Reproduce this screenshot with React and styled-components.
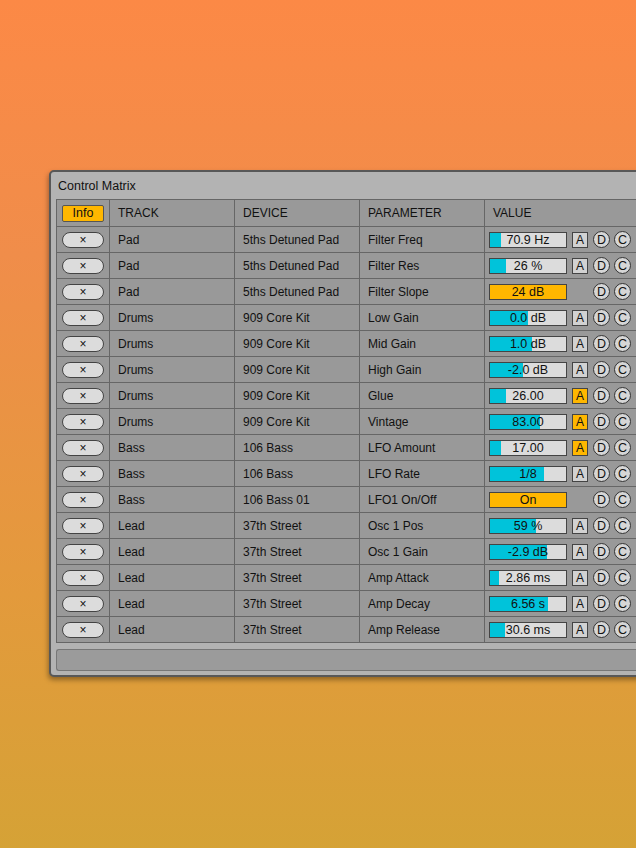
import React from "react";
import styled, { createGlobalStyle } from "styled-components";

//rows cua bang: track, device, param, value text, fill (0-1), enum (full yellow), auto (A vang)
const ROWS = [
  { track: "Pad", device: "5ths Detuned Pad", param: "Filter Freq", value: "70.9 Hz", fill: 0.14 },
  { track: "Pad", device: "5ths Detuned Pad", param: "Filter Res", value: "26 %", fill: 0.21 },
  { track: "Pad", device: "5ths Detuned Pad", param: "Filter Slope", value: "24 dB", isEnum: true },
  { track: "Drums", device: "909 Core Kit", param: "Low Gain", value: "0.0 dB", fill: 0.5 },
  { track: "Drums", device: "909 Core Kit", param: "Mid Gain", value: "1.0 dB", fill: 0.55 },
  { track: "Drums", device: "909 Core Kit", param: "High Gain", value: "-2.0 dB", fill: 0.43 },
  { track: "Drums", device: "909 Core Kit", param: "Glue", value: "26.00", fill: 0.21, auto: true },
  { track: "Drums", device: "909 Core Kit", param: "Vintage", value: "83.00", fill: 0.66, auto: true },
  { track: "Bass", device: "106 Bass", param: "LFO Amount", value: "17.00", fill: 0.14, auto: true },
  { track: "Bass", device: "106 Bass", param: "LFO Rate", value: "1/8", fill: 0.71 },
  { track: "Bass", device: "106 Bass 01", param: "LFO1 On/Off", value: "On", isEnum: true },
  { track: "Lead", device: "37th Street", param: "Osc 1 Pos", value: "59 %", fill: 0.6 },
  { track: "Lead", device: "37th Street", param: "Osc 1 Gain", value: "-2.9 dB", fill: 0.75 },
  { track: "Lead", device: "37th Street", param: "Amp Attack", value: "2.86 ms", fill: 0.12 },
  { track: "Lead", device: "37th Street", param: "Amp Decay", value: "6.56 s", fill: 0.76 },
  { track: "Lead", device: "37th Street", param: "Amp Release", value: "30.6 ms", fill: 0.2 },
];

const YELLOW = "#ffb700";
const CYAN = "#00c3da";

const GlobalStyle = createGlobalStyle`
  html, body {
    margin: 0;
    padding: 0;
  }
  body {
    min-height: 848px;
    overflow: hidden;
    background: linear-gradient(180deg, #fc8946 0%, #f08d4a 30%, #e39a3c 70%, #d5a236 100%);
    font-family: "Liberation Sans", Arial, sans-serif;
    color: #111;
  }
`;

const Page = styled.div`
  height: 848px;
  padding: 170px 0 0 49px;
  box-sizing: border-box;
`;

const Panel = styled.div`
  width: 640px;
  background: #b3b3b3;
  border: 2px solid #585858;
  border-radius: 5px;
  box-shadow: -1px 3px 5px rgba(0, 0, 0, 0.35);
  padding: 0 0 4px 5px;
  box-sizing: border-box;
`;

const Title = styled.div`
  height: 27px;
  display: flex;
  align-items: center;
  padding-left: 2px;
  font-size: 12.5px;
`;

const Table = styled.div`
  border-top: 1px solid #666;
  border-left: 1px solid #666;
  background: #999;
`;

const Row = styled.div`
  display: grid;
  grid-template-columns: 53px 125px 125px 125px 1fr;
  height: ${(p) => (p.$header ? 27 : 26)}px;
  border-bottom: 1px solid #666;
  box-sizing: border-box;
`;

const Cell = styled.div`
  display: flex;
  align-items: center;
  gap: ${(p) => (p.$value ? "5px" : "0")};
  padding-left: ${(p) => (p.$center ? "0" : p.$value ? "4px" : "8px")};
  justify-content: ${(p) => (p.$center ? "center" : "flex-start")};
  border-right: 1px solid #666;
  font-size: 12px;
  white-space: nowrap;
  overflow: hidden;
`;

const InfoButton = styled.div`
  width: 42px;
  height: 17px;
  box-sizing: border-box;
  border: 1px solid #555;
  border-radius: 2px;
  background: ${YELLOW};
  display: flex;
  align-items: center;
  justify-content: center;
  font-size: 12.5px;
`;

const RemoveButton = styled.div`
  width: 42px;
  height: 16px;
  box-sizing: border-box;
  border: 1px solid #444;
  border-radius: 8px;
  background: #dcdcdc;
  display: flex;
  align-items: center;
  justify-content: center;
  font-size: 12px;
  line-height: 1;
`;

const Slider = styled.div`
  position: relative;
  width: 78px;
  height: 16px;
  box-sizing: border-box;
  border: 1px solid #444;
  background: ${(p) => (p.$enum ? YELLOW : "#dcdcdc")};
  overflow: hidden;
  flex: none;
`;

const Fill = styled.div`
  position: absolute;
  left: 0;
  top: 0;
  bottom: 0;
  background: ${CYAN};
`;

const SliderText = styled.span`
  position: absolute;
  inset: 0;
  display: flex;
  align-items: center;
  justify-content: center;
  font-size: 12.5px;
`;

const AButton = styled.div`
  width: 16px;
  height: 16px;
  box-sizing: border-box;
  border: 1px solid #444;
  background: ${(p) => (p.$on ? YELLOW : "#d2d2d2")};
  visibility: ${(p) => (p.$hidden ? "hidden" : "visible")};
  display: flex;
  align-items: center;
  justify-content: center;
  font-size: 12px;
  flex: none;
`;

const Round = styled.div`
  width: 17px;
  height: 17px;
  box-sizing: border-box;
  border: 1px solid #333;
  border-radius: 50%;
  background: #d6d6d6;
  display: flex;
  align-items: center;
  justify-content: center;
  font-size: 12.5px;
  flex: none;
  margin-left: ${(p) => (p.$first ? "0" : "-1px")};
`;

const StatusBar = styled.div`
  margin-top: 6px;
  height: 22px;
  box-sizing: border-box;
  border: 1px solid #777;
  border-right: none;
  border-radius: 3px 0 0 3px;
  background: #9b9b9b;
`;

const ValueCell = ({ row }) => (
  <Cell $value>
    <Slider $enum={row.isEnum}>
      {!row.isEnum && <Fill style={{ width: `${row.fill * 100}%` }} />}
      <SliderText>{row.value}</SliderText>
    </Slider>
    <AButton $on={row.auto} $hidden={row.isEnum}>
      A
    </AButton>
    <Round $first>D</Round>
    <Round>C</Round>
  </Cell>
);

const App = () => {
  return (
    <Page>
      <GlobalStyle />
      <Panel>
        <Title>Control Matrix</Title>
        <Table>
          <Row $header>
            <Cell $center>
              <InfoButton>Info</InfoButton>
            </Cell>
            <Cell>TRACK</Cell>
            <Cell>DEVICE</Cell>
            <Cell>PARAMETER</Cell>
            <Cell $value style={{ paddingLeft: 8 }}>
              VALUE
            </Cell>
          </Row>
          {ROWS.map((row, i) => (
            <Row key={i}>
              <Cell $center>
                <RemoveButton>×</RemoveButton>
              </Cell>
              <Cell>{row.track}</Cell>
              <Cell>{row.device}</Cell>
              <Cell>{row.param}</Cell>
              <ValueCell row={row} />
            </Row>
          ))}
        </Table>
        <StatusBar />
      </Panel>
    </Page>
  );
};

export default App;
